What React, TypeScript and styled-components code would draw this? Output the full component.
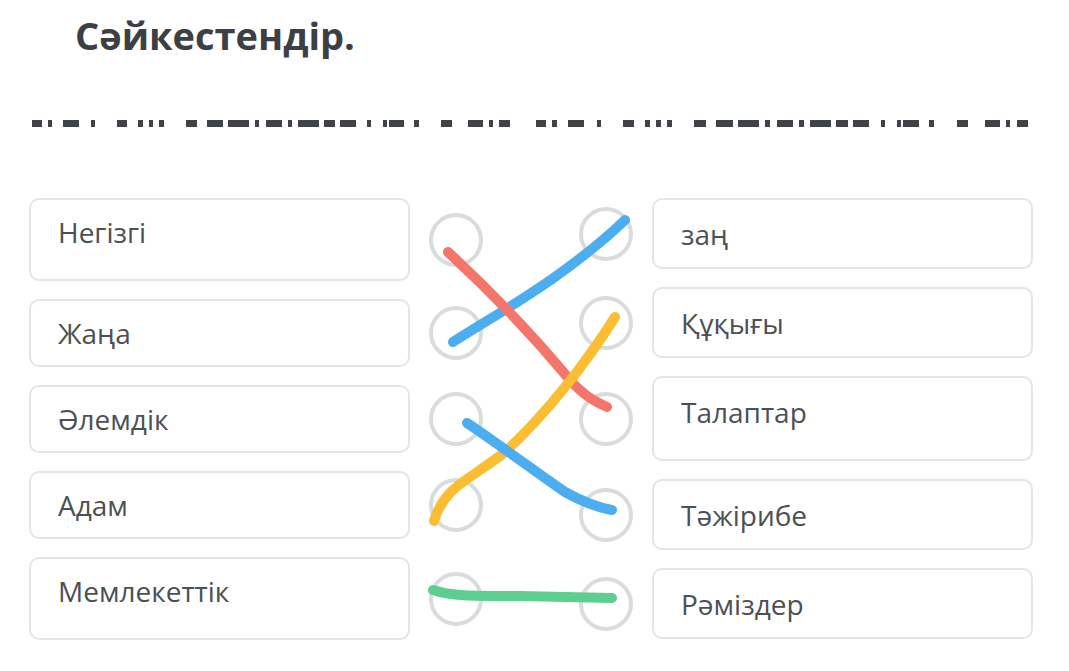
import React from 'react';
import styled, { createGlobalStyle } from 'styled-components';

const GlobalStyle = createGlobalStyle`
  html, body {
    margin: 0;
    padding: 0;
    background: #ffffff;
  }
  body {
    font-family: "Open Sans", "Noto Sans", Arial, sans-serif;
  }
`;

const Page = styled.div`
  position: relative;
  width: 1069px;
  height: 671px;
  overflow: hidden;
  background: #ffffff;
`;

const Header = styled.div`
  padding: 10px 0 0 75px;
  height: 60px;
`;

const Title = styled.h1`
  margin: 0;
  font-size: 38px;
  line-height: 50px;
  font-weight: 700;
  color: #3c4044;
`;

const DashRow = styled.div`
  display: flex;
  align-items: center;
  height: 8px;
  margin: 49px 0 0 32px;
`;

const Dash = styled.span<{ $w: number; $gap: number }>`
  display: block;
  flex: none;
  width: ${(p) => p.$w}px;
  height: 7px;
  margin-left: ${(p) => p.$gap}px;
  background: #3f4347;
`;

const Board = styled.div`
  display: flex;
  justify-content: space-between;
  margin: 71px 0 0 29px;
  width: 1004px;
`;

const Column = styled.div`
  display: flex;
  flex-direction: column;
  gap: 18px;
`;

const Item = styled.div<{ $side: 'left' | 'right' }>`
  display: flex;
  flex-direction: ${(p) => (p.$side === 'left' ? 'row' : 'row-reverse')};
  align-items: center;
  gap: 19px;
`;

const Card = styled.div<{ $h: number; $pad: number }>`
  box-sizing: border-box;
  width: 381px;
  height: ${(p) => p.$h}px;
  padding: ${(p) => p.$pad}px 27px 0;
  border: 2px solid #e3e5e6;
  border-radius: 10px;
  background: #ffffff;
  font-size: 28px;
  line-height: 40px;
  color: #4b5055;
`;

const Dot = styled.div`
  box-sizing: border-box;
  flex: none;
  width: 54px;
  height: 54px;
  border: 4px solid #d9dcdd;
  border-radius: 50%;
`;

const Links = styled.svg`
  position: absolute;
  left: 0;
  top: 0;
  pointer-events: none;
`;

// clipped line of text above the board, drawn as its visible bottom slivers
const pattern: [number, number][] = [
  [0, 10], [16, 20], [31, 47], [59, 63], [85, 95], [106, 111], [117, 121],
  [127, 132], [154, 165], [175, 191], [196, 217], [223, 227], [234, 250],
  [256, 260], [266, 287], [292, 303], [308, 324], [335, 339], [351, 355],
  [357, 372], [382, 387], [409, 420], [436, 451], [457, 461], [467, 478],
];

const dashes = (() => {
  const out: { w: number; gap: number }[] = [];
  let cursor = 0;
  [
    { offset: 0, k: 1 },
    { offset: 504, k: 1.029 },
  ].forEach(({ offset, k }) => {
    pattern.forEach(([a, b]) => {
      const start = Math.round(a * k) + offset;
      const end = Math.round(b * k) + offset;
      out.push({ w: end - start, gap: start - cursor });
      cursor = end;
    });
  });
  return out;
})();

const left = [
  { text: 'Негізгі', h: 83 },
  { text: 'Жаңа', h: 68 },
  { text: 'Әлемдік', h: 68 },
  { text: 'Адам', h: 68 },
  { text: 'Мемлекеттік', h: 83 },
];

const right = [
  { text: 'заң', h: 71 },
  { text: 'Құқығы', h: 71 },
  { text: 'Талаптар', h: 85 },
  { text: 'Тәжірибе', h: 71 },
  { text: 'Рәміздер', h: 71 },
];

const lines = [
  { color: '#4dadf1', d: 'M453 342 C 500 312, 565 277, 625 220' },
  { color: '#f4766a', d: 'M448 252 C 500 300, 545 350, 570 380 C 585 397, 598 403, 607 407' },
  { color: '#fbbd31', d: 'M615 317 C 585 365, 545 415, 505 452 C 470 480, 445 485, 434 521' },
  { color: '#4dadf1', d: 'M467 423 C 500 445, 540 475, 565 492 C 585 503, 600 508, 612 510' },
  { color: '#5ccf90', d: 'M433 590 C 450 596, 470 596, 520 596 L 612 598' },
];

export default function App() {
  return (
    <Page>
      <GlobalStyle />
      <Header>
        <Title>Сәйкестендір.</Title>
      </Header>

      <DashRow>
        {dashes.map((d, i) => (
          <Dash key={i} $w={d.w} $gap={d.gap} />
        ))}
      </DashRow>

      <Board>
        <Column>
          {left.map((it) => (
            <Item key={it.text} $side="left">
              <Card $h={it.h} $pad={12}>{it.text}</Card>
              <Dot />
            </Item>
          ))}
        </Column>
        <Column>
          {right.map((it) => (
            <Item key={it.text} $side="right">
              <Card $h={it.h} $pad={14}>{it.text}</Card>
              <Dot />
            </Item>
          ))}
        </Column>
      </Board>

      <Links width="1069" height="671" viewBox="0 0 1069 671">
        {lines.map((l, i) => (
          <path
            key={i}
            d={l.d}
            fill="none"
            stroke={l.color}
            strokeWidth={10}
            strokeLinecap="round"
            strokeLinejoin="round"
          />
        ))}
      </Links>
    </Page>
  );
}
